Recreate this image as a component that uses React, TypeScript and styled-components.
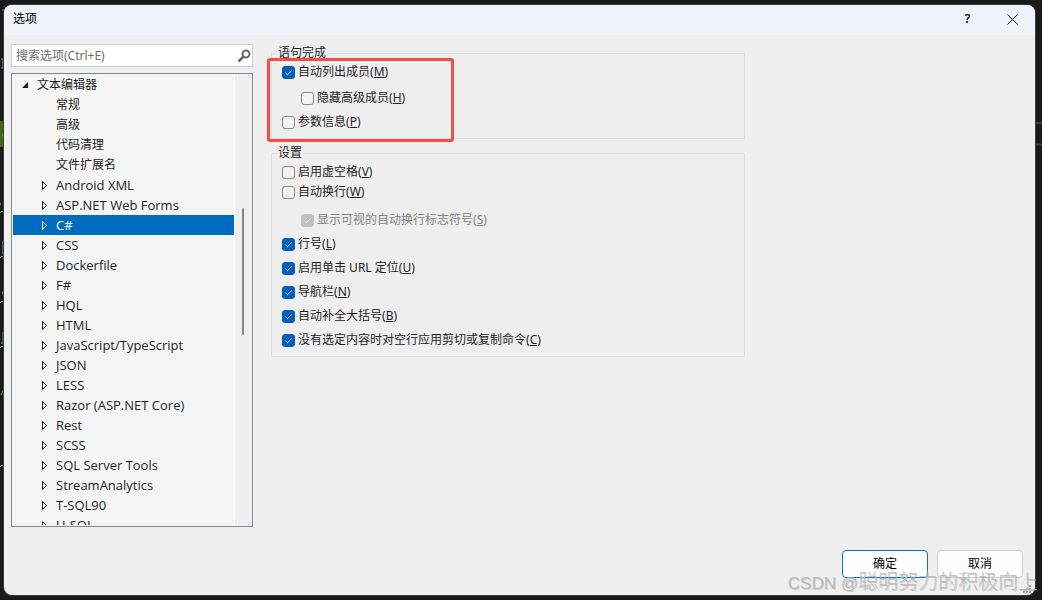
import React from "react";
import styled, { createGlobalStyle, css } from "styled-components";

const GlobalStyle = createGlobalStyle`
  * { box-sizing: border-box; }
  html, body { margin: 0; }
  body {
    background: #1a1a1a;
    font-family: "Noto Sans", "Noto Sans CJK SC", sans-serif;
    font-size: 12px;
    line-height: 20px;
    color: #1e1e1e;
  }
  button, input { font: inherit; color: inherit; }
`;

const Desktop = styled.main`
  position: relative;
  display: flex;
  min-height: 100vh;
  padding: 5px 7px 5px 4px;
  overflow: hidden;
`;

const EditorEdge = styled.svg<{ $side: "left" | "right" }>`
  position: absolute;
  top: 0;
  ${(p) => p.$side}: 0;
`;

const Dialog = styled.section`
  flex: 1;
  display: flex;
  flex-direction: column;
  position: relative;
  background: #efefef;
  border-radius: 8px;
  overflow: hidden;
  box-shadow: 0 0 0 1px #3c3c3c;
`;

const TitleBar = styled.header`
  display: flex;
  align-items: center;
  height: 30px;
  padding: 0 9px 2px;
  background: #eff3fb;
`;

const Title = styled.h1`
  flex: 1;
  margin: 0;
  font-size: 12px;
  font-weight: 400;
  color: #000;
`;

const TitleButton = styled.button`
  display: flex;
  align-items: center;
  justify-content: center;
  width: 45px;
  height: 28px;
  padding: 0;
  border: 0;
  background: transparent;
  color: #000;
  font-weight: 600;
  &:last-child { width: 28px; margin-left: 8px; }
`;

const Body = styled.div`
  flex: 1;
  display: flex;
  gap: 18px;
  padding: 9px 12px 17px 7px;
`;

const Sidebar = styled.aside`
  width: 242px;
  flex: none;
  display: flex;
  flex-direction: column;
  gap: 6px;
`;

const SearchBox = styled.label`
  display: flex;
  align-items: center;
  height: 23px;
  padding: 0 1px 0 4px;
  border: 1px solid #cccedb;
  background: #fff;
`;

const SearchInput = styled.input`
  flex: 1;
  min-width: 0;
  padding: 0;
  border: 0;
  outline: 0;
  background: transparent;
  &::placeholder { color: #6d6d6d; opacity: 1; }
`;

const TreePanel = styled.div`
  display: flex;
  height: 454px;
  padding: 1px;
  border: 1px solid #828790;
  background: #f5f5f5;
`;

const Tree = styled.ul`
  flex: 1;
  margin: 0;
  padding: 0;
  list-style: none;
  overflow: hidden;
`;

const TreeRow = styled.li<{ $level: number; $latin?: boolean; $selected?: boolean }>`
  display: flex;
  align-items: center;
  height: 20px;
  padding-left: ${(p) => (p.$level === 0 ? 8 : 27)}px;
  ${(p) => p.$latin && css`font-family: "Open Sans", sans-serif; font-size: 13px;`}
  ${(p) => p.$selected && css`background: #006cbe; color: #fff;`}
`;

const Twisty = styled.span`
  display: flex;
  align-items: center;
  width: 16px;
  height: 20px;
`;

const ScrollTrack = styled.div`
  width: 17px;
  padding: 133px 0 0 7px;
  border-left: 1px solid #fff;
  background: #efefef;
`;

const ScrollThumb = styled.div`
  width: 2px;
  height: 127px;
  border-radius: 1px;
  background: #858585;
`;

const Content = styled.div`
  flex: 1;
  display: flex;
  flex-direction: column;
  justify-content: space-between;
`;

const Groups = styled.form`
  display: flex;
  flex-direction: column;
  gap: 5px;
  width: 474px;
  max-width: 100%;
`;

const Group = styled.fieldset`
  position: relative;
  margin: 0;
  padding: 0 0 6px 10px;
  border: 1px solid #dedede;
  min-width: 0;
`;

const Legend = styled.legend`
  margin-left: -5px;
  padding: 0 1px;
  line-height: 18px;
`;

const Option = styled.label<{ $nested?: boolean; $gap: number; $disabled?: boolean }>`
  display: flex;
  align-items: center;
  gap: 3px;
  width: max-content;
  height: 20px;
  margin-top: ${(p) => p.$gap}px;
  margin-left: ${(p) => (p.$nested ? 19 : 0)}px;
  color: ${(p) => (p.$disabled ? "#838383" : "#1e1e1e")};
`;

const CheckWrap = styled.span`
  display: grid;
  width: 13px;
  height: 13px;
  & > * { grid-area: 1 / 1; }
`;

const Check = styled.input`
  appearance: none;
  width: 13px;
  height: 13px;
  margin: 0;
  border: 1px solid #8a8a8a;
  border-radius: 3px;
  background: #f3f3f3;
  &:checked { border-color: #005fb8; background: #005fb8; }
  &:disabled { border-color: #c0c0c0; background: #c0c0c0; }
  & + svg { visibility: hidden; pointer-events: none; }
  &:checked + svg { visibility: visible; }
`;

const Highlight = styled.div`
  position: absolute;
  left: -5px;
  top: -4px;
  width: 187px;
  height: 84px;
  border: 3px solid #f34e46;
  border-radius: 3px;
  pointer-events: none;
`;

const Actions = styled.footer`
  display: flex;
  justify-content: flex-end;
  gap: 9px;
`;

const ActionButton = styled.button<{ $primary?: boolean }>`
  width: 86px;
  height: 28px;
  padding: 0;
  border: 1px solid ${(p) => (p.$primary ? "#0078d4" : "#d0d0d0")};
  border-radius: 4px;
  background: #fdfdfd;
  color: #000;
`;

const Grip = styled.svg`
  position: absolute;
  right: 4px;
  bottom: 2px;
`;

const Watermark = styled.div`
  position: absolute;
  right: 4px;
  bottom: 3px;
  font-family: "Liberation Sans", "Noto Sans CJK SC", sans-serif;
  font-size: 20px;
  font-weight: 300;
  line-height: 26px;
  color: rgba(180, 180, 180, 0.8);
  text-shadow: 1px 1px 0 rgba(130, 130, 130, 0.35);
  white-space: nowrap;
  pointer-events: none;
`;

const WatermarkSite = styled.span`
  font-size: 17px;
`;

type Node = { name: string; level: number; kind: "open" | "closed" | "leaf" };

const nodes: Node[] = [
  { name: "文本编辑器", level: 0, kind: "open" },
  ...["常规", "高级", "代码清理", "文件扩展名"].map((name): Node => ({ name, level: 1, kind: "leaf" })),
  ...[
    "Android XML", "ASP.NET Web Forms", "C#", "CSS", "Dockerfile", "F#", "HQL", "HTML",
    "JavaScript/TypeScript", "JSON", "LESS", "Razor (ASP.NET Core)", "Rest", "SCSS",
    "SQL Server Tools", "StreamAnalytics", "T-SQL90", "U-SQL",
  ].map((name): Node => ({ name, level: 1, kind: "closed" })),
];

type Setting = { text: string; access: string; gap: number; checked?: boolean; nested?: boolean; disabled?: boolean };

const completion: Setting[] = [
  { text: "自动列出成员", access: "M", gap: 0, checked: true },
  { text: "隐藏高级成员", access: "H", gap: 6, nested: true },
  { text: "参数信息", access: "P", gap: 4 },
];

const settings: Setting[] = [
  { text: "启用虚空格", access: "V", gap: 0 },
  { text: "自动换行", access: "W", gap: 0 },
  { text: "显示可视的自动换行标志符号", access: "S", gap: 8, checked: true, nested: true, disabled: true },
  { text: "行号", access: "L", gap: 4, checked: true },
  { text: "启用单击 URL 定位", access: "U", gap: 4, checked: true },
  { text: "导航栏", access: "N", gap: 4, checked: true },
  { text: "自动补全大括号", access: "B", gap: 4, checked: true },
  { text: "没有选定内容时对空行应用剪切或复制命令", access: "C", gap: 4, checked: true },
];

const SettingOption = ({ item }: { item: Setting }) => (
  <Option $nested={item.nested} $gap={item.gap} $disabled={item.disabled}>
    <CheckWrap>
      <Check type="checkbox" defaultChecked={item.checked} disabled={item.disabled} />
      <svg width="13" height="13" viewBox="0 0 13 13" fill="none" stroke="#e6f0fa">
        <path d="M3.5 6.8 5.5 8.7 9.6 4.7" />
      </svg>
    </CheckWrap>
    <span>{item.text}(<u>{item.access}</u>)</span>
  </Option>
);

const TreeArrow = ({ kind }: { kind: Node["kind"] }) => {
  if (kind === "open") return <svg width="8" height="8"><path d="M7 1v6H1z" fill="#1e1e1e" /></svg>;
  if (kind === "closed")
    return <svg width="8" height="12" fill="none" stroke="currentColor"><path d="M2.5 2.500v8l4-4z" /></svg>;
  return null;
};

export default function App() {
  return (
    <Desktop>
      <GlobalStyle />
      <EditorEdge $side="left" width="4" height="480" fill="none" aria-hidden="true">
        <path d="M0 121h4v26H0z" fill="#3f6a12" />
        <path d="M2 135h2" stroke="#2b91af" strokeWidth="3" />
        <path d="M2 10h2M1 59h2v9H1" stroke="#6f8fa8" />
        <path d="M0 204h1" stroke="#d0502c" strokeWidth="3" />
        <path d="M3.500 201v6M2 242h1v11H2M3 332v11H1M3.500 453v3" stroke="#6f86d0" />
        <path d="M4 290q-3 2 0 6" stroke="#a8a8a8" />
        <path d="M0 213l2-2 2 2M0 258l2-2 2 2M0 303l2-2 2 2M0 348l2-2 2 2M0 467l2-2 2 2M1 395l3-6" stroke="#5f9a44" />
      </EditorEdge>
      <EditorEdge $side="right" width="7" height="160" aria-hidden="true">
        <path d="M0 123h7M0 144.500h7" stroke="#3f3f3f" strokeWidth="2" />
      </EditorEdge>
      <Dialog role="dialog" aria-labelledby="dialog-title">
        <TitleBar>
          <Title id="dialog-title">选项</Title>
          <TitleButton aria-label="帮助">?</TitleButton>
          <TitleButton aria-label="关闭">
            <svg width="11" height="11" stroke="currentColor"><path d="M.5.5l10 10M10.500.5l-10 10" /></svg>
          </TitleButton>
        </TitleBar>
        <Body>
          <Sidebar>
            <SearchBox>
              <SearchInput placeholder="搜索选项(Ctrl+E)" aria-label="搜索选项" />
              <svg width="14" height="14" fill="none" stroke="#686868" strokeWidth="2">
                <circle cx="9" cy="5" r="3.500" />
                <path d="M6.500 7.500 1.500 12.500" strokeWidth="2.500" />
              </svg>
            </SearchBox>
            <TreePanel>
              <Tree>
                {nodes.map((n) => (
                  <TreeRow key={n.name} $level={n.level} $latin={n.kind === "closed"} $selected={n.name === "C#"}>
                    <Twisty><TreeArrow kind={n.kind} /></Twisty>
                    {n.name}
                  </TreeRow>
                ))}
              </Tree>
              <ScrollTrack><ScrollThumb /></ScrollTrack>
            </TreePanel>
          </Sidebar>
          <Content>
            <Groups>
              <Group>
                <Legend>语句完成</Legend>
                {completion.map((s) => <SettingOption key={s.access} item={s} />)}
                <Highlight />
              </Group>
              <Group>
                <Legend>设置</Legend>
                {settings.map((s) => <SettingOption key={s.access} item={s} />)}
              </Group>
            </Groups>
            <Actions>
              <ActionButton $primary>确定</ActionButton>
              <ActionButton>取消</ActionButton>
            </Actions>
          </Content>
        </Body>
        <Grip width="10" height="10" fill="#a0a0a0">
          <path d="M8 2h2v2h-2zM5 5h2v2h-2zM8 5h2v2h-2zM2 8h2v2h-2zM5 8h2v2h-2zM8 8h2v2h-2z" />
        </Grip>
      </Dialog>
      <Watermark><WatermarkSite>CSDN @</WatermarkSite>聪明努力的积极向上</Watermark>
    </Desktop>
  );
}
